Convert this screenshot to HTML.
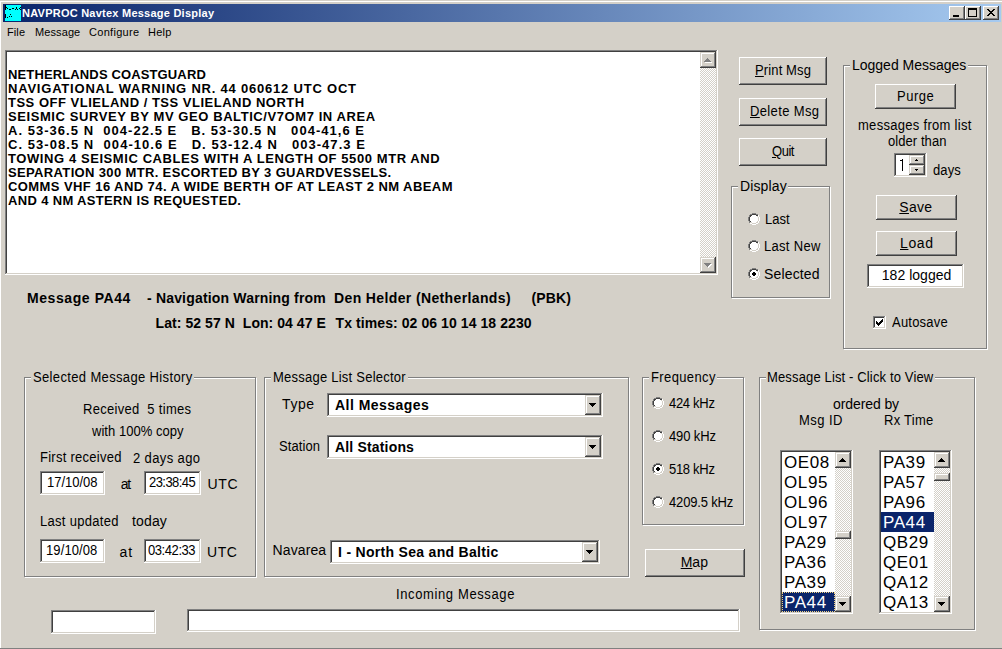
<!DOCTYPE html><html><head><meta charset="utf-8"><style>html,body{margin:0;padding:0;}body{width:1002px;height:649px;position:relative;overflow:hidden;background:#d4d0c8;font-family:"Liberation Sans",sans-serif;}div{position:absolute;box-sizing:border-box;}.t{white-space:pre;}</style></head><body>
<div style="left:0px;top:1px;width:1002px;height:1px;background:#ffffff;"></div>
<div style="left:0px;top:1px;width:1px;height:648px;background:#ffffff;"></div>
<div style="left:0px;top:648px;width:1002px;height:1px;background:#808080;"></div>
<div style="left:3px;top:4px;width:998px;height:18px;background:linear-gradient(to right,#0a246a,#a6caf0)"></div>
<div style="left:5px;top:5px;width:16px;height:16px;background:#00ffff;"></div>
<svg style="position:absolute;left:5px;top:5px" width="16" height="16" shape-rendering="crispEdges"><rect x="0" y="0" width="1" height="1" fill="#000"/><rect x="0" y="1" width="1" height="1" fill="#000"/><rect x="0" y="2" width="2" height="1" fill="#000"/><rect x="11" y="2" width="1" height="1" fill="#000"/><rect x="15" y="2" width="1" height="1" fill="#000"/><rect x="0" y="3" width="1" height="1" fill="#000"/><rect x="2" y="3" width="1" height="1" fill="#000"/><rect x="7" y="3" width="2" height="1" fill="#000"/><rect x="11" y="3" width="1" height="1" fill="#000"/><rect x="14" y="3" width="1" height="1" fill="#000"/><rect x="0" y="4" width="1" height="1" fill="#000"/><rect x="4" y="4" width="2" height="1" fill="#000"/><rect x="10" y="4" width="1" height="1" fill="#000"/><rect x="12" y="4" width="1" height="1" fill="#000"/><rect x="15" y="4" width="1" height="1" fill="#000"/><rect x="0" y="9" width="1" height="1" fill="#000"/><rect x="5" y="9" width="1" height="1" fill="#000"/><rect x="0" y="10" width="1" height="1" fill="#000"/><rect x="0" y="11" width="1" height="1" fill="#000"/><rect x="4" y="11" width="1" height="1" fill="#000"/><rect x="6" y="11" width="1" height="1" fill="#000"/><rect x="0" y="12" width="1" height="1" fill="#000"/><rect x="2" y="12" width="1" height="1" fill="#000"/></svg>
<div class="t" style="left:22.00px;top:8px;font-size:11px;line-height:11px;font-weight:bold;letter-spacing:0.240px;color:#fff;">NAVPROC Navtex Message Display</div>
<div style="left:949px;top:6px;width:16px;height:14px;background:#d4d0c8;box-shadow:inset -1px -1px #404040,inset 1px 1px #ffffff,inset -2px -2px #808080"></div>
<div style="left:965px;top:6px;width:16px;height:14px;background:#d4d0c8;box-shadow:inset -1px -1px #404040,inset 1px 1px #ffffff,inset -2px -2px #808080"></div>
<div style="left:983px;top:6px;width:16px;height:14px;background:#d4d0c8;box-shadow:inset -1px -1px #404040,inset 1px 1px #ffffff,inset -2px -2px #808080"></div>
<div style="left:953px;top:15px;width:6px;height:2px;background:#000;"></div>
<div style="left:968px;top:8px;width:9px;height:9px;border:1px solid #000;border-top-width:2px"></div>
<svg style="position:absolute;left:987px;top:9px" width="8" height="7" shape-rendering="crispEdges"><rect x="0" y="0" width="2" height="1" fill="#000"/><rect x="6" y="0" width="2" height="1" fill="#000"/><rect x="1" y="1" width="2" height="1" fill="#000"/><rect x="5" y="1" width="2" height="1" fill="#000"/><rect x="2" y="2" width="4" height="1" fill="#000"/><rect x="3" y="3" width="2" height="1" fill="#000"/><rect x="2" y="4" width="4" height="1" fill="#000"/><rect x="1" y="5" width="2" height="1" fill="#000"/><rect x="5" y="5" width="2" height="1" fill="#000"/><rect x="0" y="6" width="2" height="1" fill="#000"/><rect x="6" y="6" width="2" height="1" fill="#000"/></svg>
<div class="t" style="left:7.00px;top:27px;font-size:11px;line-height:11px;letter-spacing:0.100px;color:#000;">File</div>
<div class="t" style="left:35.00px;top:27px;font-size:11px;line-height:11px;letter-spacing:0.100px;color:#000;">Message</div>
<div class="t" style="left:89.00px;top:27px;font-size:11px;line-height:11px;letter-spacing:0.300px;color:#000;">Configure</div>
<div class="t" style="left:148.00px;top:27px;font-size:11px;line-height:11px;letter-spacing:0.250px;color:#000;">Help</div>
<div style="left:5px;top:50px;width:713px;height:225px;background:#fff;box-shadow:inset -1px -1px #ffffff,inset 1px 1px #808080,inset -2px -2px #d4d0c8,inset 2px 2px #404040"></div>
<div style="left:700px;top:52px;width:16px;height:16px;background:#d4d0c8;box-shadow:inset -1px -1px #404040,inset 1px 1px #d4d0c8,inset -2px -2px #808080,inset 2px 2px #ffffff"></div>
<div style="left:700px;top:257px;width:16px;height:16px;background:#d4d0c8;box-shadow:inset -1px -1px #404040,inset 1px 1px #d4d0c8,inset -2px -2px #808080,inset 2px 2px #ffffff"></div>
<svg style="position:absolute;left:700px;top:68px" width="16" height="189" shape-rendering="crispEdges"><defs><pattern id="ck700_68" width="2" height="2" patternUnits="userSpaceOnUse"><rect width="2" height="2" fill="#fff"/><rect x="1" y="0" width="1" height="1" fill="#d4d0c8"/><rect x="0" y="1" width="1" height="1" fill="#d4d0c8"/></pattern></defs><rect width="100%" height="100%" fill="url(#ck700_68)"/></svg>
<svg style="position:absolute;left:705px;top:59px" width="7" height="4" shape-rendering="crispEdges"><rect x="3" y="0" width="1" height="1" fill="#fff"/><rect x="2" y="1" width="3" height="1" fill="#fff"/><rect x="1" y="2" width="5" height="1" fill="#fff"/><rect x="0" y="3" width="7" height="1" fill="#fff"/></svg>
<svg style="position:absolute;left:704px;top:58px" width="7" height="4" shape-rendering="crispEdges"><rect x="3" y="0" width="1" height="1" fill="#808080"/><rect x="2" y="1" width="3" height="1" fill="#808080"/><rect x="1" y="2" width="5" height="1" fill="#808080"/><rect x="0" y="3" width="7" height="1" fill="#808080"/></svg>
<svg style="position:absolute;left:705px;top:264px" width="7" height="4" shape-rendering="crispEdges"><rect x="0" y="0" width="7" height="1" fill="#fff"/><rect x="1" y="1" width="5" height="1" fill="#fff"/><rect x="2" y="2" width="3" height="1" fill="#fff"/><rect x="3" y="3" width="1" height="1" fill="#fff"/></svg>
<svg style="position:absolute;left:704px;top:263px" width="7" height="4" shape-rendering="crispEdges"><rect x="0" y="0" width="7" height="1" fill="#808080"/><rect x="1" y="1" width="5" height="1" fill="#808080"/><rect x="2" y="2" width="3" height="1" fill="#808080"/><rect x="3" y="3" width="1" height="1" fill="#808080"/></svg>
<div class="t" style="left:8.00px;top:68px;font-size:13px;line-height:13px;font-weight:bold;letter-spacing:0.133px;color:#000;">NETHERLANDS COASTGUARD</div>
<div class="t" style="left:8.00px;top:82px;font-size:13px;line-height:13px;font-weight:bold;letter-spacing:0.789px;color:#000;">NAVIGATIONAL WARNING NR. 44 060612 UTC OCT</div>
<div class="t" style="left:8.00px;top:96px;font-size:13px;line-height:13px;font-weight:bold;letter-spacing:0.504px;color:#000;">TSS OFF VLIELAND / TSS VLIELAND NORTH</div>
<div class="t" style="left:8.00px;top:110px;font-size:13px;line-height:13px;font-weight:bold;letter-spacing:0.578px;color:#000;">SEISMIC SURVEY BY MV GEO BALTIC/V7OM7 IN AREA</div>
<div class="t" style="left:8.00px;top:124px;font-size:13px;line-height:13px;font-weight:bold;letter-spacing:1.029px;color:#000;">A. 53-36.5 N  004-22.5 E   B. 53-30.5 N   004-41,6 E</div>
<div class="t" style="left:8.00px;top:138px;font-size:13px;line-height:13px;font-weight:bold;letter-spacing:1.047px;color:#000;">C. 53-08.5 N  004-10.6 E   D. 53-12.4 N   003-47.3 E</div>
<div class="t" style="left:8.00px;top:152px;font-size:13px;line-height:13px;font-weight:bold;letter-spacing:0.584px;color:#000;">TOWING 4 SEISMIC CABLES WITH A LENGTH OF 5500 MTR AND</div>
<div class="t" style="left:8.00px;top:166px;font-size:13px;line-height:13px;font-weight:bold;letter-spacing:0.351px;color:#000;">SEPARATION 300 MTR. ESCORTED BY 3 GUARDVESSELS.</div>
<div class="t" style="left:8.00px;top:180px;font-size:13px;line-height:13px;font-weight:bold;letter-spacing:0.421px;color:#000;">COMMS VHF 16 AND 74. A WIDE BERTH OF AT LEAST 2 NM ABEAM</div>
<div class="t" style="left:8.00px;top:194px;font-size:13px;line-height:13px;font-weight:bold;letter-spacing:0.341px;color:#000;">AND 4 NM ASTERN IS REQUESTED.</div>
<div style="left:739px;top:57px;width:88px;height:28px;background:#d4d0c8;box-shadow:inset -1px -1px #404040,inset 1px 1px #ffffff,inset -2px -2px #808080"></div>
<div class="t" style="left:755.00px;top:63px;font-size:14px;line-height:14px;letter-spacing:0.135px;color:#000;transform:scaleX(0.9286);transform-origin:0 0;"><u>P</u>rint Msg</div>
<div style="left:739px;top:98px;width:88px;height:28px;background:#d4d0c8;box-shadow:inset -1px -1px #404040,inset 1px 1px #ffffff,inset -2px -2px #808080"></div>
<div class="t" style="left:750.00px;top:104px;font-size:14px;line-height:14px;letter-spacing:0.396px;color:#000;transform:scaleX(0.9286);transform-origin:0 0;"><u>D</u>elete Msg</div>
<div style="left:739px;top:138px;width:88px;height:28px;background:#d4d0c8;box-shadow:inset -1px -1px #404040,inset 1px 1px #ffffff,inset -2px -2px #808080"></div>
<div class="t" style="left:771.60px;top:144px;font-size:14px;line-height:14px;letter-spacing:-0.506px;color:#000;transform:scaleX(0.9286);transform-origin:0 0;"><u>Q</u>uit</div>
<div style="left:732px;top:187px;width:99px;height:112px;border:1px solid #ffffff"></div>
<div style="left:731px;top:186px;width:99px;height:112px;border:1px solid #808080"></div>
<div style="left:738px;top:184px;width:50px;height:5px;background:#d4d0c8;"></div>
<div class="t" style="left:740.00px;top:179px;font-size:14px;line-height:14px;letter-spacing:0.133px;color:#000;">Display</div>
<svg style="position:absolute;left:748px;top:213px" width="12" height="12" shape-rendering="crispEdges"><rect x="4" y="0" width="4" height="1" fill="#808080"/><rect x="2" y="1" width="2" height="1" fill="#808080"/><rect x="4" y="1" width="4" height="1" fill="#404040"/><rect x="8" y="1" width="2" height="1" fill="#808080"/><rect x="1" y="2" width="1" height="1" fill="#808080"/><rect x="2" y="2" width="2" height="1" fill="#404040"/><rect x="4" y="2" width="4" height="1" fill="#fff"/><rect x="8" y="2" width="2" height="1" fill="#404040"/><rect x="10" y="2" width="1" height="1" fill="#fff"/><rect x="1" y="3" width="1" height="1" fill="#808080"/><rect x="2" y="3" width="1" height="1" fill="#404040"/><rect x="3" y="3" width="6" height="1" fill="#fff"/><rect x="9" y="3" width="1" height="1" fill="#d4d0c8"/><rect x="10" y="3" width="1" height="1" fill="#fff"/><rect x="0" y="4" width="1" height="1" fill="#808080"/><rect x="1" y="4" width="1" height="1" fill="#404040"/><rect x="2" y="4" width="8" height="1" fill="#fff"/><rect x="10" y="4" width="1" height="1" fill="#d4d0c8"/><rect x="11" y="4" width="1" height="1" fill="#fff"/><rect x="0" y="5" width="1" height="1" fill="#808080"/><rect x="1" y="5" width="1" height="1" fill="#404040"/><rect x="2" y="5" width="8" height="1" fill="#fff"/><rect x="10" y="5" width="1" height="1" fill="#d4d0c8"/><rect x="11" y="5" width="1" height="1" fill="#fff"/><rect x="0" y="6" width="1" height="1" fill="#808080"/><rect x="1" y="6" width="1" height="1" fill="#404040"/><rect x="2" y="6" width="8" height="1" fill="#fff"/><rect x="10" y="6" width="1" height="1" fill="#d4d0c8"/><rect x="11" y="6" width="1" height="1" fill="#fff"/><rect x="0" y="7" width="1" height="1" fill="#808080"/><rect x="1" y="7" width="1" height="1" fill="#404040"/><rect x="2" y="7" width="8" height="1" fill="#fff"/><rect x="10" y="7" width="1" height="1" fill="#d4d0c8"/><rect x="11" y="7" width="1" height="1" fill="#fff"/><rect x="1" y="8" width="1" height="1" fill="#808080"/><rect x="2" y="8" width="1" height="1" fill="#404040"/><rect x="3" y="8" width="6" height="1" fill="#fff"/><rect x="9" y="8" width="1" height="1" fill="#d4d0c8"/><rect x="10" y="8" width="1" height="1" fill="#fff"/><rect x="1" y="9" width="1" height="1" fill="#808080"/><rect x="2" y="9" width="2" height="1" fill="#d4d0c8"/><rect x="4" y="9" width="4" height="1" fill="#fff"/><rect x="8" y="9" width="2" height="1" fill="#d4d0c8"/><rect x="10" y="9" width="1" height="1" fill="#fff"/><rect x="2" y="10" width="2" height="1" fill="#fff"/><rect x="4" y="10" width="4" height="1" fill="#d4d0c8"/><rect x="8" y="10" width="2" height="1" fill="#fff"/><rect x="4" y="11" width="4" height="1" fill="#fff"/></svg>
<div class="t" style="left:765.00px;top:212px;font-size:14px;line-height:14px;color:#000;transform:scaleX(0.9286);transform-origin:0 0;">Last</div>
<svg style="position:absolute;left:748px;top:240px" width="12" height="12" shape-rendering="crispEdges"><rect x="4" y="0" width="4" height="1" fill="#808080"/><rect x="2" y="1" width="2" height="1" fill="#808080"/><rect x="4" y="1" width="4" height="1" fill="#404040"/><rect x="8" y="1" width="2" height="1" fill="#808080"/><rect x="1" y="2" width="1" height="1" fill="#808080"/><rect x="2" y="2" width="2" height="1" fill="#404040"/><rect x="4" y="2" width="4" height="1" fill="#fff"/><rect x="8" y="2" width="2" height="1" fill="#404040"/><rect x="10" y="2" width="1" height="1" fill="#fff"/><rect x="1" y="3" width="1" height="1" fill="#808080"/><rect x="2" y="3" width="1" height="1" fill="#404040"/><rect x="3" y="3" width="6" height="1" fill="#fff"/><rect x="9" y="3" width="1" height="1" fill="#d4d0c8"/><rect x="10" y="3" width="1" height="1" fill="#fff"/><rect x="0" y="4" width="1" height="1" fill="#808080"/><rect x="1" y="4" width="1" height="1" fill="#404040"/><rect x="2" y="4" width="8" height="1" fill="#fff"/><rect x="10" y="4" width="1" height="1" fill="#d4d0c8"/><rect x="11" y="4" width="1" height="1" fill="#fff"/><rect x="0" y="5" width="1" height="1" fill="#808080"/><rect x="1" y="5" width="1" height="1" fill="#404040"/><rect x="2" y="5" width="8" height="1" fill="#fff"/><rect x="10" y="5" width="1" height="1" fill="#d4d0c8"/><rect x="11" y="5" width="1" height="1" fill="#fff"/><rect x="0" y="6" width="1" height="1" fill="#808080"/><rect x="1" y="6" width="1" height="1" fill="#404040"/><rect x="2" y="6" width="8" height="1" fill="#fff"/><rect x="10" y="6" width="1" height="1" fill="#d4d0c8"/><rect x="11" y="6" width="1" height="1" fill="#fff"/><rect x="0" y="7" width="1" height="1" fill="#808080"/><rect x="1" y="7" width="1" height="1" fill="#404040"/><rect x="2" y="7" width="8" height="1" fill="#fff"/><rect x="10" y="7" width="1" height="1" fill="#d4d0c8"/><rect x="11" y="7" width="1" height="1" fill="#fff"/><rect x="1" y="8" width="1" height="1" fill="#808080"/><rect x="2" y="8" width="1" height="1" fill="#404040"/><rect x="3" y="8" width="6" height="1" fill="#fff"/><rect x="9" y="8" width="1" height="1" fill="#d4d0c8"/><rect x="10" y="8" width="1" height="1" fill="#fff"/><rect x="1" y="9" width="1" height="1" fill="#808080"/><rect x="2" y="9" width="2" height="1" fill="#d4d0c8"/><rect x="4" y="9" width="4" height="1" fill="#fff"/><rect x="8" y="9" width="2" height="1" fill="#d4d0c8"/><rect x="10" y="9" width="1" height="1" fill="#fff"/><rect x="2" y="10" width="2" height="1" fill="#fff"/><rect x="4" y="10" width="4" height="1" fill="#d4d0c8"/><rect x="8" y="10" width="2" height="1" fill="#fff"/><rect x="4" y="11" width="4" height="1" fill="#fff"/></svg>
<div class="t" style="left:764.20px;top:239px;font-size:14px;line-height:14px;letter-spacing:0.325px;color:#000;transform:scaleX(0.9286);transform-origin:0 0;">Last New</div>
<svg style="position:absolute;left:748px;top:268px" width="12" height="12" shape-rendering="crispEdges"><rect x="4" y="0" width="4" height="1" fill="#808080"/><rect x="2" y="1" width="2" height="1" fill="#808080"/><rect x="4" y="1" width="4" height="1" fill="#404040"/><rect x="8" y="1" width="2" height="1" fill="#808080"/><rect x="1" y="2" width="1" height="1" fill="#808080"/><rect x="2" y="2" width="2" height="1" fill="#404040"/><rect x="4" y="2" width="4" height="1" fill="#fff"/><rect x="8" y="2" width="2" height="1" fill="#404040"/><rect x="10" y="2" width="1" height="1" fill="#fff"/><rect x="1" y="3" width="1" height="1" fill="#808080"/><rect x="2" y="3" width="1" height="1" fill="#404040"/><rect x="3" y="3" width="6" height="1" fill="#fff"/><rect x="9" y="3" width="1" height="1" fill="#d4d0c8"/><rect x="10" y="3" width="1" height="1" fill="#fff"/><rect x="0" y="4" width="1" height="1" fill="#808080"/><rect x="1" y="4" width="1" height="1" fill="#404040"/><rect x="2" y="4" width="3" height="1" fill="#fff"/><rect x="5" y="4" width="2" height="1" fill="#000"/><rect x="7" y="4" width="3" height="1" fill="#fff"/><rect x="10" y="4" width="1" height="1" fill="#d4d0c8"/><rect x="11" y="4" width="1" height="1" fill="#fff"/><rect x="0" y="5" width="1" height="1" fill="#808080"/><rect x="1" y="5" width="1" height="1" fill="#404040"/><rect x="2" y="5" width="2" height="1" fill="#fff"/><rect x="4" y="5" width="4" height="1" fill="#000"/><rect x="8" y="5" width="2" height="1" fill="#fff"/><rect x="10" y="5" width="1" height="1" fill="#d4d0c8"/><rect x="11" y="5" width="1" height="1" fill="#fff"/><rect x="0" y="6" width="1" height="1" fill="#808080"/><rect x="1" y="6" width="1" height="1" fill="#404040"/><rect x="2" y="6" width="2" height="1" fill="#fff"/><rect x="4" y="6" width="4" height="1" fill="#000"/><rect x="8" y="6" width="2" height="1" fill="#fff"/><rect x="10" y="6" width="1" height="1" fill="#d4d0c8"/><rect x="11" y="6" width="1" height="1" fill="#fff"/><rect x="0" y="7" width="1" height="1" fill="#808080"/><rect x="1" y="7" width="1" height="1" fill="#404040"/><rect x="2" y="7" width="3" height="1" fill="#fff"/><rect x="5" y="7" width="2" height="1" fill="#000"/><rect x="7" y="7" width="3" height="1" fill="#fff"/><rect x="10" y="7" width="1" height="1" fill="#d4d0c8"/><rect x="11" y="7" width="1" height="1" fill="#fff"/><rect x="1" y="8" width="1" height="1" fill="#808080"/><rect x="2" y="8" width="1" height="1" fill="#404040"/><rect x="3" y="8" width="6" height="1" fill="#fff"/><rect x="9" y="8" width="1" height="1" fill="#d4d0c8"/><rect x="10" y="8" width="1" height="1" fill="#fff"/><rect x="1" y="9" width="1" height="1" fill="#808080"/><rect x="2" y="9" width="2" height="1" fill="#d4d0c8"/><rect x="4" y="9" width="4" height="1" fill="#fff"/><rect x="8" y="9" width="2" height="1" fill="#d4d0c8"/><rect x="10" y="9" width="1" height="1" fill="#fff"/><rect x="2" y="10" width="2" height="1" fill="#fff"/><rect x="4" y="10" width="4" height="1" fill="#d4d0c8"/><rect x="8" y="10" width="2" height="1" fill="#fff"/><rect x="4" y="11" width="4" height="1" fill="#fff"/></svg>
<div class="t" style="left:764.00px;top:267px;font-size:14px;line-height:14px;letter-spacing:0.154px;color:#000;">Selected</div>
<div style="left:844px;top:66px;width:144px;height:284px;border:1px solid #ffffff"></div>
<div style="left:843px;top:65px;width:144px;height:284px;border:1px solid #808080"></div>
<div style="left:850px;top:63px;width:118px;height:5px;background:#d4d0c8;"></div>
<div class="t" style="left:852.00px;top:58px;font-size:14px;line-height:14px;letter-spacing:-0.007px;color:#000;">Logged Messages</div>
<div style="left:875px;top:84px;width:81px;height:25px;background:#d4d0c8;box-shadow:inset -1px -1px #404040,inset 1px 1px #ffffff,inset -2px -2px #808080"></div>
<div class="t" style="left:896.50px;top:89px;font-size:14px;line-height:14px;letter-spacing:0.538px;color:#000;transform:scaleX(0.9286);transform-origin:0 0;">Purge</div>
<div class="t" style="left:858.20px;top:118px;font-size:14px;line-height:14px;letter-spacing:0.313px;color:#000;transform:scaleX(0.9286);transform-origin:0 0;">messages from list</div>
<div class="t" style="left:887.70px;top:134px;font-size:14px;line-height:14px;letter-spacing:0.073px;color:#000;transform:scaleX(0.9286);transform-origin:0 0;">older than</div>
<div style="left:894px;top:153px;width:33px;height:24px;background:#fff;box-shadow:inset -1px -1px #ffffff,inset 1px 1px #808080,inset -2px -2px #d4d0c8,inset 2px 2px #404040"></div>
<div style="left:909px;top:155px;width:16px;height:10px;background:#d4d0c8;box-shadow:inset -1px -1px #404040,inset 1px 1px #d4d0c8,inset -2px -2px #808080,inset 2px 2px #ffffff"></div>
<div style="left:909px;top:165px;width:16px;height:10px;background:#d4d0c8;box-shadow:inset -1px -1px #404040,inset 1px 1px #d4d0c8,inset -2px -2px #808080,inset 2px 2px #ffffff"></div>
<svg style="position:absolute;left:915px;top:159px" width="3" height="2" shape-rendering="crispEdges"><rect x="1" y="0" width="1" height="1" fill="#000"/><rect x="0" y="1" width="3" height="1" fill="#000"/></svg>
<svg style="position:absolute;left:915px;top:169px" width="3" height="2" shape-rendering="crispEdges"><rect x="0" y="0" width="3" height="1" fill="#000"/><rect x="1" y="1" width="1" height="1" fill="#000"/></svg>
<svg style="position:absolute;left:900px;top:159px" width="3" height="12" shape-rendering="crispEdges"><rect x="2" y="0" width="1" height="1" fill="#000"/><rect x="0" y="1" width="3" height="1" fill="#000"/><rect x="2" y="2" width="1" height="1" fill="#000"/><rect x="2" y="3" width="1" height="1" fill="#000"/><rect x="2" y="4" width="1" height="1" fill="#000"/><rect x="2" y="5" width="1" height="1" fill="#000"/><rect x="2" y="6" width="1" height="1" fill="#000"/><rect x="2" y="7" width="1" height="1" fill="#000"/><rect x="2" y="8" width="1" height="1" fill="#000"/><rect x="2" y="9" width="1" height="1" fill="#000"/><rect x="2" y="10" width="1" height="1" fill="#000"/><rect x="2" y="11" width="1" height="1" fill="#000"/></svg>
<div class="t" style="left:933.00px;top:163px;font-size:14px;line-height:14px;letter-spacing:0.143px;color:#000;transform:scaleX(0.9286);transform-origin:0 0;">days</div>
<div style="left:876px;top:195px;width:81px;height:25px;background:#d4d0c8;box-shadow:inset -1px -1px #404040,inset 1px 1px #ffffff,inset -2px -2px #808080"></div>
<div class="t" style="left:899.30px;top:200px;font-size:14px;line-height:14px;letter-spacing:0.303px;color:#000;"><u>S</u>ave</div>
<div style="left:876px;top:231px;width:81px;height:25px;background:#d4d0c8;box-shadow:inset -1px -1px #404040,inset 1px 1px #ffffff,inset -2px -2px #808080"></div>
<div class="t" style="left:900.00px;top:236px;font-size:14px;line-height:14px;letter-spacing:0.636px;color:#000;"><u>L</u>oad</div>
<div style="left:867px;top:264px;width:97px;height:24px;background:#fff;box-shadow:inset -1px -1px #ffffff,inset 1px 1px #808080,inset -2px -2px #d4d0c8,inset 2px 2px #404040"></div>
<div class="t" style="left:881.80px;top:268px;font-size:14px;line-height:14px;letter-spacing:0.026px;color:#000;">182 logged</div>
<div style="left:873px;top:316px;width:13px;height:13px;background:#fff;box-shadow:inset -1px -1px #ffffff,inset 1px 1px #808080,inset -2px -2px #d4d0c8,inset 2px 2px #404040"></div>
<svg style="position:absolute;left:876px;top:319px" width="7" height="7" shape-rendering="crispEdges"><rect x="6" y="0" width="1" height="1" fill="#000"/><rect x="5" y="1" width="2" height="1" fill="#000"/><rect x="0" y="2" width="1" height="1" fill="#000"/><rect x="4" y="2" width="3" height="1" fill="#000"/><rect x="0" y="3" width="2" height="1" fill="#000"/><rect x="3" y="3" width="3" height="1" fill="#000"/><rect x="0" y="4" width="5" height="1" fill="#000"/><rect x="1" y="5" width="3" height="1" fill="#000"/><rect x="2" y="6" width="1" height="1" fill="#000"/></svg>
<div class="t" style="left:891.70px;top:315px;font-size:14px;line-height:14px;letter-spacing:0.230px;color:#000;transform:scaleX(0.9286);transform-origin:0 0;">Autosave</div>
<div class="t" style="left:27.00px;top:291px;font-size:14px;line-height:14px;font-weight:bold;letter-spacing:0.574px;color:#000;">Message PA44</div>
<div class="t" style="left:147.00px;top:291px;font-size:14px;line-height:14px;font-weight:bold;letter-spacing:0.178px;color:#000;">- Navigation Warning from</div>
<div class="t" style="left:334.00px;top:291px;font-size:14px;line-height:14px;font-weight:bold;letter-spacing:0.371px;color:#000;">Den Helder (Netherlands)</div>
<div class="t" style="left:531.60px;top:291px;font-size:14px;line-height:14px;font-weight:bold;letter-spacing:0.100px;color:#000;">(PBK)</div>
<div class="t" style="left:155.60px;top:316px;font-size:14px;line-height:14px;font-weight:bold;letter-spacing:0.055px;color:#000;">Lat: 52 57 N</div>
<div class="t" style="left:242.80px;top:316px;font-size:14px;line-height:14px;font-weight:bold;letter-spacing:0.044px;color:#000;">Lon: 04 47 E</div>
<div class="t" style="left:335.60px;top:316px;font-size:14px;line-height:14px;font-weight:bold;letter-spacing:0.078px;color:#000;">Tx times: 02 06 10 14 18 2230</div>
<div style="left:25px;top:378px;width:232px;height:200px;border:1px solid #ffffff"></div>
<div style="left:24px;top:377px;width:232px;height:200px;border:1px solid #808080"></div>
<div style="left:31px;top:375px;width:163px;height:5px;background:#d4d0c8;"></div>
<div class="t" style="left:32.70px;top:370px;font-size:14px;line-height:14px;letter-spacing:0.381px;color:#000;transform:scaleX(0.9286);transform-origin:0 0;">Selected Message History</div>
<div class="t" style="left:83.30px;top:402px;font-size:14px;line-height:14px;letter-spacing:0.317px;color:#000;transform:scaleX(0.9286);transform-origin:0 0;">Received  5 times</div>
<div class="t" style="left:92.30px;top:424px;font-size:14px;line-height:14px;letter-spacing:0.041px;color:#000;transform:scaleX(0.9286);transform-origin:0 0;">with 100% copy</div>
<div class="t" style="left:40.00px;top:450px;font-size:14px;line-height:14px;letter-spacing:0.290px;color:#000;transform:scaleX(0.9286);transform-origin:0 0;">First received</div>
<div class="t" style="left:133.00px;top:451px;font-size:14px;line-height:14px;letter-spacing:0.404px;color:#000;transform:scaleX(0.9286);transform-origin:0 0;">2 days ago</div>
<div style="left:40px;top:471px;width:65px;height:24px;background:#fff;box-shadow:inset -1px -1px #ffffff,inset 1px 1px #808080,inset -2px -2px #d4d0c8,inset 2px 2px #404040"></div>
<div class="t" style="left:47.00px;top:475px;font-size:14px;line-height:14px;letter-spacing:-0.030px;color:#000;transform:scaleX(0.9286);transform-origin:0 0;">17/10/08</div>
<div class="t" style="left:120.70px;top:477px;font-size:14px;line-height:14px;letter-spacing:-1.100px;color:#000;">at</div>
<div style="left:144px;top:471px;width:57px;height:24px;background:#fff;box-shadow:inset -1px -1px #ffffff,inset 1px 1px #808080,inset -2px -2px #d4d0c8,inset 2px 2px #404040"></div>
<div class="t" style="left:148.80px;top:475px;font-size:14px;line-height:14px;letter-spacing:-0.607px;color:#000;transform:scaleX(0.9286);transform-origin:0 0;">23:38:45</div>
<div class="t" style="left:207.60px;top:477px;font-size:14px;line-height:14px;letter-spacing:0.600px;color:#000;">UTC</div>
<div class="t" style="left:39.50px;top:514px;font-size:14px;line-height:14px;letter-spacing:0.325px;color:#000;transform:scaleX(0.9286);transform-origin:0 0;">Last updated</div>
<div class="t" style="left:132.00px;top:514px;font-size:14px;line-height:14px;letter-spacing:0.150px;color:#000;">today</div>
<div style="left:40px;top:539px;width:65px;height:24px;background:#fff;box-shadow:inset -1px -1px #ffffff,inset 1px 1px #808080,inset -2px -2px #d4d0c8,inset 2px 2px #404040"></div>
<div class="t" style="left:46.00px;top:543px;font-size:14px;line-height:14px;letter-spacing:0.114px;color:#000;transform:scaleX(0.9286);transform-origin:0 0;">19/10/08</div>
<div class="t" style="left:119.40px;top:545px;font-size:14px;line-height:14px;letter-spacing:1.000px;color:#000;">at</div>
<div style="left:144px;top:539px;width:57px;height:24px;background:#fff;box-shadow:inset -1px -1px #ffffff,inset 1px 1px #808080,inset -2px -2px #d4d0c8,inset 2px 2px #404040"></div>
<div class="t" style="left:148.00px;top:543px;font-size:14px;line-height:14px;letter-spacing:-0.462px;color:#000;transform:scaleX(0.9286);transform-origin:0 0;">03:42:33</div>
<div class="t" style="left:207.00px;top:545px;font-size:14px;line-height:14px;letter-spacing:0.600px;color:#000;">UTC</div>
<div style="left:265px;top:378px;width:365px;height:200px;border:1px solid #ffffff"></div>
<div style="left:264px;top:377px;width:365px;height:200px;border:1px solid #808080"></div>
<div style="left:271px;top:375px;width:137px;height:5px;background:#d4d0c8;"></div>
<div class="t" style="left:272.50px;top:370px;font-size:14px;line-height:14px;letter-spacing:0.253px;color:#000;transform:scaleX(0.9286);transform-origin:0 0;">Message List Selector</div>
<div class="t" style="left:282.00px;top:397px;font-size:14px;line-height:14px;letter-spacing:0.600px;color:#000;">Type</div>
<div style="left:327px;top:393px;width:276px;height:24px;background:#fff;box-shadow:inset -1px -1px #ffffff,inset 1px 1px #808080,inset -2px -2px #d4d0c8,inset 2px 2px #404040"></div>
<div style="left:585px;top:395px;width:16px;height:20px;background:#d4d0c8;box-shadow:inset -1px -1px #404040,inset 1px 1px #d4d0c8,inset -2px -2px #808080,inset 2px 2px #ffffff"></div>
<svg style="position:absolute;left:589px;top:403px" width="7" height="4" shape-rendering="crispEdges"><rect x="0" y="0" width="7" height="1" fill="#000"/><rect x="1" y="1" width="5" height="1" fill="#000"/><rect x="2" y="2" width="3" height="1" fill="#000"/><rect x="3" y="3" width="1" height="1" fill="#000"/></svg>
<div class="t" style="left:335.00px;top:398px;font-size:14px;line-height:14px;font-weight:bold;letter-spacing:0.464px;color:#000;">All Messages</div>
<div class="t" style="left:278.60px;top:439px;font-size:14px;line-height:14px;letter-spacing:0.089px;color:#000;transform:scaleX(0.9286);transform-origin:0 0;">Station</div>
<div style="left:327px;top:435px;width:276px;height:24px;background:#fff;box-shadow:inset -1px -1px #ffffff,inset 1px 1px #808080,inset -2px -2px #d4d0c8,inset 2px 2px #404040"></div>
<div style="left:585px;top:437px;width:16px;height:20px;background:#d4d0c8;box-shadow:inset -1px -1px #404040,inset 1px 1px #d4d0c8,inset -2px -2px #808080,inset 2px 2px #ffffff"></div>
<svg style="position:absolute;left:589px;top:445px" width="7" height="4" shape-rendering="crispEdges"><rect x="0" y="0" width="7" height="1" fill="#000"/><rect x="1" y="1" width="5" height="1" fill="#000"/><rect x="2" y="2" width="3" height="1" fill="#000"/><rect x="3" y="3" width="1" height="1" fill="#000"/></svg>
<div class="t" style="left:335.00px;top:440px;font-size:14px;line-height:14px;font-weight:bold;letter-spacing:0.173px;color:#000;">All Stations</div>
<div class="t" style="left:272.50px;top:543px;font-size:14px;line-height:14px;letter-spacing:0.117px;color:#000;">Navarea</div>
<div style="left:330px;top:540px;width:270px;height:24px;background:#fff;box-shadow:inset -1px -1px #ffffff,inset 1px 1px #808080,inset -2px -2px #d4d0c8,inset 2px 2px #404040"></div>
<div style="left:582px;top:542px;width:16px;height:20px;background:#d4d0c8;box-shadow:inset -1px -1px #404040,inset 1px 1px #d4d0c8,inset -2px -2px #808080,inset 2px 2px #ffffff"></div>
<svg style="position:absolute;left:586px;top:550px" width="7" height="4" shape-rendering="crispEdges"><rect x="0" y="0" width="7" height="1" fill="#000"/><rect x="1" y="1" width="5" height="1" fill="#000"/><rect x="2" y="2" width="3" height="1" fill="#000"/><rect x="3" y="3" width="1" height="1" fill="#000"/></svg>
<div class="t" style="left:338.00px;top:545px;font-size:14px;line-height:14px;font-weight:bold;letter-spacing:0.302px;color:#000;">I - North Sea and Baltic</div>
<div style="left:643px;top:378px;width:102px;height:148px;border:1px solid #ffffff"></div>
<div style="left:642px;top:377px;width:102px;height:148px;border:1px solid #808080"></div>
<div style="left:649px;top:375px;width:68px;height:5px;background:#d4d0c8;"></div>
<div class="t" style="left:650.60px;top:370px;font-size:14px;line-height:14px;letter-spacing:0.408px;color:#000;transform:scaleX(0.9286);transform-origin:0 0;">Frequency</div>
<svg style="position:absolute;left:652px;top:397px" width="12" height="12" shape-rendering="crispEdges"><rect x="4" y="0" width="4" height="1" fill="#808080"/><rect x="2" y="1" width="2" height="1" fill="#808080"/><rect x="4" y="1" width="4" height="1" fill="#404040"/><rect x="8" y="1" width="2" height="1" fill="#808080"/><rect x="1" y="2" width="1" height="1" fill="#808080"/><rect x="2" y="2" width="2" height="1" fill="#404040"/><rect x="4" y="2" width="4" height="1" fill="#fff"/><rect x="8" y="2" width="2" height="1" fill="#404040"/><rect x="10" y="2" width="1" height="1" fill="#fff"/><rect x="1" y="3" width="1" height="1" fill="#808080"/><rect x="2" y="3" width="1" height="1" fill="#404040"/><rect x="3" y="3" width="6" height="1" fill="#fff"/><rect x="9" y="3" width="1" height="1" fill="#d4d0c8"/><rect x="10" y="3" width="1" height="1" fill="#fff"/><rect x="0" y="4" width="1" height="1" fill="#808080"/><rect x="1" y="4" width="1" height="1" fill="#404040"/><rect x="2" y="4" width="8" height="1" fill="#fff"/><rect x="10" y="4" width="1" height="1" fill="#d4d0c8"/><rect x="11" y="4" width="1" height="1" fill="#fff"/><rect x="0" y="5" width="1" height="1" fill="#808080"/><rect x="1" y="5" width="1" height="1" fill="#404040"/><rect x="2" y="5" width="8" height="1" fill="#fff"/><rect x="10" y="5" width="1" height="1" fill="#d4d0c8"/><rect x="11" y="5" width="1" height="1" fill="#fff"/><rect x="0" y="6" width="1" height="1" fill="#808080"/><rect x="1" y="6" width="1" height="1" fill="#404040"/><rect x="2" y="6" width="8" height="1" fill="#fff"/><rect x="10" y="6" width="1" height="1" fill="#d4d0c8"/><rect x="11" y="6" width="1" height="1" fill="#fff"/><rect x="0" y="7" width="1" height="1" fill="#808080"/><rect x="1" y="7" width="1" height="1" fill="#404040"/><rect x="2" y="7" width="8" height="1" fill="#fff"/><rect x="10" y="7" width="1" height="1" fill="#d4d0c8"/><rect x="11" y="7" width="1" height="1" fill="#fff"/><rect x="1" y="8" width="1" height="1" fill="#808080"/><rect x="2" y="8" width="1" height="1" fill="#404040"/><rect x="3" y="8" width="6" height="1" fill="#fff"/><rect x="9" y="8" width="1" height="1" fill="#d4d0c8"/><rect x="10" y="8" width="1" height="1" fill="#fff"/><rect x="1" y="9" width="1" height="1" fill="#808080"/><rect x="2" y="9" width="2" height="1" fill="#d4d0c8"/><rect x="4" y="9" width="4" height="1" fill="#fff"/><rect x="8" y="9" width="2" height="1" fill="#d4d0c8"/><rect x="10" y="9" width="1" height="1" fill="#fff"/><rect x="2" y="10" width="2" height="1" fill="#fff"/><rect x="4" y="10" width="4" height="1" fill="#d4d0c8"/><rect x="8" y="10" width="2" height="1" fill="#fff"/><rect x="4" y="11" width="4" height="1" fill="#fff"/></svg>
<div class="t" style="left:668.50px;top:396px;font-size:14px;line-height:14px;letter-spacing:-0.323px;color:#000;transform:scaleX(0.9286);transform-origin:0 0;">424 kHz</div>
<svg style="position:absolute;left:652px;top:430px" width="12" height="12" shape-rendering="crispEdges"><rect x="4" y="0" width="4" height="1" fill="#808080"/><rect x="2" y="1" width="2" height="1" fill="#808080"/><rect x="4" y="1" width="4" height="1" fill="#404040"/><rect x="8" y="1" width="2" height="1" fill="#808080"/><rect x="1" y="2" width="1" height="1" fill="#808080"/><rect x="2" y="2" width="2" height="1" fill="#404040"/><rect x="4" y="2" width="4" height="1" fill="#fff"/><rect x="8" y="2" width="2" height="1" fill="#404040"/><rect x="10" y="2" width="1" height="1" fill="#fff"/><rect x="1" y="3" width="1" height="1" fill="#808080"/><rect x="2" y="3" width="1" height="1" fill="#404040"/><rect x="3" y="3" width="6" height="1" fill="#fff"/><rect x="9" y="3" width="1" height="1" fill="#d4d0c8"/><rect x="10" y="3" width="1" height="1" fill="#fff"/><rect x="0" y="4" width="1" height="1" fill="#808080"/><rect x="1" y="4" width="1" height="1" fill="#404040"/><rect x="2" y="4" width="8" height="1" fill="#fff"/><rect x="10" y="4" width="1" height="1" fill="#d4d0c8"/><rect x="11" y="4" width="1" height="1" fill="#fff"/><rect x="0" y="5" width="1" height="1" fill="#808080"/><rect x="1" y="5" width="1" height="1" fill="#404040"/><rect x="2" y="5" width="8" height="1" fill="#fff"/><rect x="10" y="5" width="1" height="1" fill="#d4d0c8"/><rect x="11" y="5" width="1" height="1" fill="#fff"/><rect x="0" y="6" width="1" height="1" fill="#808080"/><rect x="1" y="6" width="1" height="1" fill="#404040"/><rect x="2" y="6" width="8" height="1" fill="#fff"/><rect x="10" y="6" width="1" height="1" fill="#d4d0c8"/><rect x="11" y="6" width="1" height="1" fill="#fff"/><rect x="0" y="7" width="1" height="1" fill="#808080"/><rect x="1" y="7" width="1" height="1" fill="#404040"/><rect x="2" y="7" width="8" height="1" fill="#fff"/><rect x="10" y="7" width="1" height="1" fill="#d4d0c8"/><rect x="11" y="7" width="1" height="1" fill="#fff"/><rect x="1" y="8" width="1" height="1" fill="#808080"/><rect x="2" y="8" width="1" height="1" fill="#404040"/><rect x="3" y="8" width="6" height="1" fill="#fff"/><rect x="9" y="8" width="1" height="1" fill="#d4d0c8"/><rect x="10" y="8" width="1" height="1" fill="#fff"/><rect x="1" y="9" width="1" height="1" fill="#808080"/><rect x="2" y="9" width="2" height="1" fill="#d4d0c8"/><rect x="4" y="9" width="4" height="1" fill="#fff"/><rect x="8" y="9" width="2" height="1" fill="#d4d0c8"/><rect x="10" y="9" width="1" height="1" fill="#fff"/><rect x="2" y="10" width="2" height="1" fill="#fff"/><rect x="4" y="10" width="4" height="1" fill="#d4d0c8"/><rect x="8" y="10" width="2" height="1" fill="#fff"/><rect x="4" y="11" width="4" height="1" fill="#fff"/></svg>
<div class="t" style="left:668.50px;top:429px;font-size:14px;line-height:14px;letter-spacing:-0.127px;color:#000;transform:scaleX(0.9286);transform-origin:0 0;">490 kHz</div>
<svg style="position:absolute;left:652px;top:463px" width="12" height="12" shape-rendering="crispEdges"><rect x="4" y="0" width="4" height="1" fill="#808080"/><rect x="2" y="1" width="2" height="1" fill="#808080"/><rect x="4" y="1" width="4" height="1" fill="#404040"/><rect x="8" y="1" width="2" height="1" fill="#808080"/><rect x="1" y="2" width="1" height="1" fill="#808080"/><rect x="2" y="2" width="2" height="1" fill="#404040"/><rect x="4" y="2" width="4" height="1" fill="#fff"/><rect x="8" y="2" width="2" height="1" fill="#404040"/><rect x="10" y="2" width="1" height="1" fill="#fff"/><rect x="1" y="3" width="1" height="1" fill="#808080"/><rect x="2" y="3" width="1" height="1" fill="#404040"/><rect x="3" y="3" width="6" height="1" fill="#fff"/><rect x="9" y="3" width="1" height="1" fill="#d4d0c8"/><rect x="10" y="3" width="1" height="1" fill="#fff"/><rect x="0" y="4" width="1" height="1" fill="#808080"/><rect x="1" y="4" width="1" height="1" fill="#404040"/><rect x="2" y="4" width="3" height="1" fill="#fff"/><rect x="5" y="4" width="2" height="1" fill="#000"/><rect x="7" y="4" width="3" height="1" fill="#fff"/><rect x="10" y="4" width="1" height="1" fill="#d4d0c8"/><rect x="11" y="4" width="1" height="1" fill="#fff"/><rect x="0" y="5" width="1" height="1" fill="#808080"/><rect x="1" y="5" width="1" height="1" fill="#404040"/><rect x="2" y="5" width="2" height="1" fill="#fff"/><rect x="4" y="5" width="4" height="1" fill="#000"/><rect x="8" y="5" width="2" height="1" fill="#fff"/><rect x="10" y="5" width="1" height="1" fill="#d4d0c8"/><rect x="11" y="5" width="1" height="1" fill="#fff"/><rect x="0" y="6" width="1" height="1" fill="#808080"/><rect x="1" y="6" width="1" height="1" fill="#404040"/><rect x="2" y="6" width="2" height="1" fill="#fff"/><rect x="4" y="6" width="4" height="1" fill="#000"/><rect x="8" y="6" width="2" height="1" fill="#fff"/><rect x="10" y="6" width="1" height="1" fill="#d4d0c8"/><rect x="11" y="6" width="1" height="1" fill="#fff"/><rect x="0" y="7" width="1" height="1" fill="#808080"/><rect x="1" y="7" width="1" height="1" fill="#404040"/><rect x="2" y="7" width="3" height="1" fill="#fff"/><rect x="5" y="7" width="2" height="1" fill="#000"/><rect x="7" y="7" width="3" height="1" fill="#fff"/><rect x="10" y="7" width="1" height="1" fill="#d4d0c8"/><rect x="11" y="7" width="1" height="1" fill="#fff"/><rect x="1" y="8" width="1" height="1" fill="#808080"/><rect x="2" y="8" width="1" height="1" fill="#404040"/><rect x="3" y="8" width="6" height="1" fill="#fff"/><rect x="9" y="8" width="1" height="1" fill="#d4d0c8"/><rect x="10" y="8" width="1" height="1" fill="#fff"/><rect x="1" y="9" width="1" height="1" fill="#808080"/><rect x="2" y="9" width="2" height="1" fill="#d4d0c8"/><rect x="4" y="9" width="4" height="1" fill="#fff"/><rect x="8" y="9" width="2" height="1" fill="#d4d0c8"/><rect x="10" y="9" width="1" height="1" fill="#fff"/><rect x="2" y="10" width="2" height="1" fill="#fff"/><rect x="4" y="10" width="4" height="1" fill="#d4d0c8"/><rect x="8" y="10" width="2" height="1" fill="#fff"/><rect x="4" y="11" width="4" height="1" fill="#fff"/></svg>
<div class="t" style="left:668.50px;top:462px;font-size:14px;line-height:14px;letter-spacing:-0.323px;color:#000;transform:scaleX(0.9286);transform-origin:0 0;">518 kHz</div>
<svg style="position:absolute;left:652px;top:496px" width="12" height="12" shape-rendering="crispEdges"><rect x="4" y="0" width="4" height="1" fill="#808080"/><rect x="2" y="1" width="2" height="1" fill="#808080"/><rect x="4" y="1" width="4" height="1" fill="#404040"/><rect x="8" y="1" width="2" height="1" fill="#808080"/><rect x="1" y="2" width="1" height="1" fill="#808080"/><rect x="2" y="2" width="2" height="1" fill="#404040"/><rect x="4" y="2" width="4" height="1" fill="#fff"/><rect x="8" y="2" width="2" height="1" fill="#404040"/><rect x="10" y="2" width="1" height="1" fill="#fff"/><rect x="1" y="3" width="1" height="1" fill="#808080"/><rect x="2" y="3" width="1" height="1" fill="#404040"/><rect x="3" y="3" width="6" height="1" fill="#fff"/><rect x="9" y="3" width="1" height="1" fill="#d4d0c8"/><rect x="10" y="3" width="1" height="1" fill="#fff"/><rect x="0" y="4" width="1" height="1" fill="#808080"/><rect x="1" y="4" width="1" height="1" fill="#404040"/><rect x="2" y="4" width="8" height="1" fill="#fff"/><rect x="10" y="4" width="1" height="1" fill="#d4d0c8"/><rect x="11" y="4" width="1" height="1" fill="#fff"/><rect x="0" y="5" width="1" height="1" fill="#808080"/><rect x="1" y="5" width="1" height="1" fill="#404040"/><rect x="2" y="5" width="8" height="1" fill="#fff"/><rect x="10" y="5" width="1" height="1" fill="#d4d0c8"/><rect x="11" y="5" width="1" height="1" fill="#fff"/><rect x="0" y="6" width="1" height="1" fill="#808080"/><rect x="1" y="6" width="1" height="1" fill="#404040"/><rect x="2" y="6" width="8" height="1" fill="#fff"/><rect x="10" y="6" width="1" height="1" fill="#d4d0c8"/><rect x="11" y="6" width="1" height="1" fill="#fff"/><rect x="0" y="7" width="1" height="1" fill="#808080"/><rect x="1" y="7" width="1" height="1" fill="#404040"/><rect x="2" y="7" width="8" height="1" fill="#fff"/><rect x="10" y="7" width="1" height="1" fill="#d4d0c8"/><rect x="11" y="7" width="1" height="1" fill="#fff"/><rect x="1" y="8" width="1" height="1" fill="#808080"/><rect x="2" y="8" width="1" height="1" fill="#404040"/><rect x="3" y="8" width="6" height="1" fill="#fff"/><rect x="9" y="8" width="1" height="1" fill="#d4d0c8"/><rect x="10" y="8" width="1" height="1" fill="#fff"/><rect x="1" y="9" width="1" height="1" fill="#808080"/><rect x="2" y="9" width="2" height="1" fill="#d4d0c8"/><rect x="4" y="9" width="4" height="1" fill="#fff"/><rect x="8" y="9" width="2" height="1" fill="#d4d0c8"/><rect x="10" y="9" width="1" height="1" fill="#fff"/><rect x="2" y="10" width="2" height="1" fill="#fff"/><rect x="4" y="10" width="4" height="1" fill="#d4d0c8"/><rect x="8" y="10" width="2" height="1" fill="#fff"/><rect x="4" y="11" width="4" height="1" fill="#fff"/></svg>
<div class="t" style="left:668.50px;top:495px;font-size:14px;line-height:14px;letter-spacing:-0.172px;color:#000;transform:scaleX(0.9286);transform-origin:0 0;">4209.5 kHz</div>
<div style="left:645px;top:549px;width:100px;height:28px;background:#d4d0c8;box-shadow:inset -1px -1px #404040,inset 1px 1px #ffffff,inset -2px -2px #808080"></div>
<div class="t" style="left:680.70px;top:555px;font-size:14px;line-height:14px;color:#000;"><u>M</u>ap</div>
<div style="left:760px;top:378px;width:216px;height:253px;border:1px solid #ffffff"></div>
<div style="left:759px;top:377px;width:216px;height:253px;border:1px solid #808080"></div>
<div style="left:766px;top:375px;width:169px;height:5px;background:#d4d0c8;"></div>
<div class="t" style="left:767.30px;top:370px;font-size:14px;line-height:14px;letter-spacing:0.155px;color:#000;transform:scaleX(0.9286);transform-origin:0 0;">Message List - Click to View</div>
<div class="t" style="left:833.00px;top:397px;font-size:14px;line-height:14px;letter-spacing:-0.095px;color:#000;">ordered by</div>
<div class="t" style="left:798.80px;top:413px;font-size:14px;line-height:14px;letter-spacing:0.474px;color:#000;transform:scaleX(0.9286);transform-origin:0 0;">Msg ID</div>
<div class="t" style="left:883.70px;top:413px;font-size:14px;line-height:14px;letter-spacing:0.290px;color:#000;transform:scaleX(0.9286);transform-origin:0 0;">Rx Time</div>
<div style="left:780px;top:450px;width:73px;height:164px;background:#fff;box-shadow:inset -1px -1px #ffffff,inset 1px 1px #808080,inset -2px -2px #d4d0c8,inset 2px 2px #404040"></div>
<svg style="position:absolute;left:835px;top:468px" width="16" height="128" shape-rendering="crispEdges"><defs><pattern id="ck835_468" width="2" height="2" patternUnits="userSpaceOnUse"><rect width="2" height="2" fill="#fff"/><rect x="1" y="0" width="1" height="1" fill="#d4d0c8"/><rect x="0" y="1" width="1" height="1" fill="#d4d0c8"/></pattern></defs><rect width="100%" height="100%" fill="url(#ck835_468)"/></svg>
<div style="left:835px;top:452px;width:16px;height:16px;background:#d4d0c8;box-shadow:inset -1px -1px #404040,inset 1px 1px #d4d0c8,inset -2px -2px #808080,inset 2px 2px #ffffff"></div>
<svg style="position:absolute;left:839px;top:458px" width="7" height="4" shape-rendering="crispEdges"><rect x="3" y="0" width="1" height="1" fill="#000"/><rect x="2" y="1" width="3" height="1" fill="#000"/><rect x="1" y="2" width="5" height="1" fill="#000"/><rect x="0" y="3" width="7" height="1" fill="#000"/></svg>
<div style="left:835px;top:596px;width:16px;height:16px;background:#d4d0c8;box-shadow:inset -1px -1px #404040,inset 1px 1px #d4d0c8,inset -2px -2px #808080,inset 2px 2px #ffffff"></div>
<svg style="position:absolute;left:839px;top:602px" width="7" height="4" shape-rendering="crispEdges"><rect x="0" y="0" width="7" height="1" fill="#000"/><rect x="1" y="1" width="5" height="1" fill="#000"/><rect x="2" y="2" width="3" height="1" fill="#000"/><rect x="3" y="3" width="1" height="1" fill="#000"/></svg>
<div style="left:835px;top:531px;width:16px;height:8px;background:#d4d0c8;box-shadow:inset -1px -1px #404040,inset 1px 1px #d4d0c8,inset -2px -2px #808080,inset 2px 2px #ffffff"></div>
<div class="t" style="left:784.00px;top:454px;font-size:17px;line-height:17px;letter-spacing:0.600px;color:#000;">OE08</div>
<div class="t" style="left:784.00px;top:474px;font-size:17px;line-height:17px;letter-spacing:0.600px;color:#000;">OL95</div>
<div class="t" style="left:784.00px;top:494px;font-size:17px;line-height:17px;letter-spacing:0.600px;color:#000;">OL96</div>
<div class="t" style="left:784.00px;top:514px;font-size:17px;line-height:17px;letter-spacing:0.600px;color:#000;">OL97</div>
<div class="t" style="left:784.00px;top:534px;font-size:17px;line-height:17px;letter-spacing:0.600px;color:#000;">PA29</div>
<div class="t" style="left:784.00px;top:554px;font-size:17px;line-height:17px;letter-spacing:0.600px;color:#000;">PA36</div>
<div class="t" style="left:784.00px;top:574px;font-size:17px;line-height:17px;letter-spacing:0.600px;color:#000;">PA39</div>
<div style="left:782px;top:592px;width:53px;height:20px;background:#0a246a;"></div>
<div style="left:782px;top:592px;width:53px;height:20px;border:1px dotted #f0d080"></div>
<div class="t" style="left:784.00px;top:594px;font-size:17px;line-height:17px;letter-spacing:0.600px;color:#fff;">PA44</div>
<div style="left:879px;top:450px;width:73px;height:164px;background:#fff;box-shadow:inset -1px -1px #ffffff,inset 1px 1px #808080,inset -2px -2px #d4d0c8,inset 2px 2px #404040"></div>
<svg style="position:absolute;left:934px;top:468px" width="16" height="128" shape-rendering="crispEdges"><defs><pattern id="ck934_468" width="2" height="2" patternUnits="userSpaceOnUse"><rect width="2" height="2" fill="#fff"/><rect x="1" y="0" width="1" height="1" fill="#d4d0c8"/><rect x="0" y="1" width="1" height="1" fill="#d4d0c8"/></pattern></defs><rect width="100%" height="100%" fill="url(#ck934_468)"/></svg>
<div style="left:934px;top:452px;width:16px;height:16px;background:#d4d0c8;box-shadow:inset -1px -1px #404040,inset 1px 1px #d4d0c8,inset -2px -2px #808080,inset 2px 2px #ffffff"></div>
<svg style="position:absolute;left:938px;top:458px" width="7" height="4" shape-rendering="crispEdges"><rect x="3" y="0" width="1" height="1" fill="#000"/><rect x="2" y="1" width="3" height="1" fill="#000"/><rect x="1" y="2" width="5" height="1" fill="#000"/><rect x="0" y="3" width="7" height="1" fill="#000"/></svg>
<div style="left:934px;top:596px;width:16px;height:16px;background:#d4d0c8;box-shadow:inset -1px -1px #404040,inset 1px 1px #d4d0c8,inset -2px -2px #808080,inset 2px 2px #ffffff"></div>
<svg style="position:absolute;left:938px;top:602px" width="7" height="4" shape-rendering="crispEdges"><rect x="0" y="0" width="7" height="1" fill="#000"/><rect x="1" y="1" width="5" height="1" fill="#000"/><rect x="2" y="2" width="3" height="1" fill="#000"/><rect x="3" y="3" width="1" height="1" fill="#000"/></svg>
<div style="left:934px;top:473px;width:16px;height:8px;background:#d4d0c8;box-shadow:inset -1px -1px #404040,inset 1px 1px #d4d0c8,inset -2px -2px #808080,inset 2px 2px #ffffff"></div>
<div class="t" style="left:883.00px;top:454px;font-size:17px;line-height:17px;letter-spacing:0.600px;color:#000;">PA39</div>
<div class="t" style="left:883.00px;top:474px;font-size:17px;line-height:17px;letter-spacing:0.600px;color:#000;">PA57</div>
<div class="t" style="left:883.00px;top:494px;font-size:17px;line-height:17px;letter-spacing:0.600px;color:#000;">PA96</div>
<div style="left:881px;top:512px;width:53px;height:20px;background:#0a246a;"></div>
<div class="t" style="left:883.00px;top:514px;font-size:17px;line-height:17px;letter-spacing:0.600px;color:#fff;">PA44</div>
<div class="t" style="left:883.00px;top:534px;font-size:17px;line-height:17px;letter-spacing:0.600px;color:#000;">QB29</div>
<div class="t" style="left:883.00px;top:554px;font-size:17px;line-height:17px;letter-spacing:0.600px;color:#000;">QE01</div>
<div class="t" style="left:883.00px;top:574px;font-size:17px;line-height:17px;letter-spacing:0.600px;color:#000;">QA12</div>
<div class="t" style="left:883.00px;top:594px;font-size:17px;line-height:17px;letter-spacing:0.600px;color:#000;">QA13</div>
<div class="t" style="left:396.20px;top:587px;font-size:14px;line-height:14px;letter-spacing:0.668px;color:#000;transform:scaleX(0.9286);transform-origin:0 0;">Incoming Message</div>
<div style="left:51px;top:610px;width:105px;height:24px;background:#fff;box-shadow:inset -1px -1px #ffffff,inset 1px 1px #808080,inset -2px -2px #d4d0c8,inset 2px 2px #404040"></div>
<div style="left:187px;top:609px;width:553px;height:23px;background:#fff;box-shadow:inset -1px -1px #ffffff,inset 1px 1px #808080,inset -2px -2px #d4d0c8,inset 2px 2px #404040"></div>
</body></html>
